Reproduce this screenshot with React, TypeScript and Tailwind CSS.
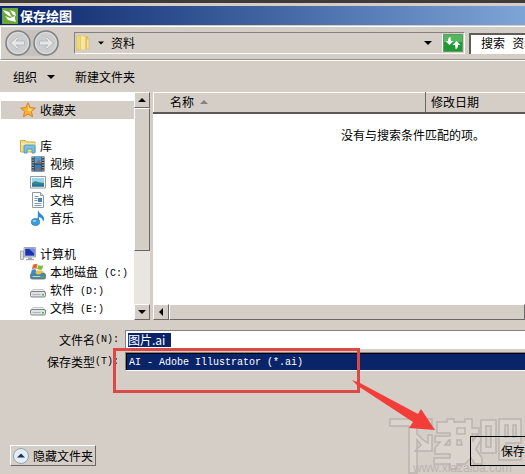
import { useState } from 'react';
import type { ReactNode } from 'react';

const FolderIcon = () => (
  <svg width="16" height="18" viewBox="0 0 16 18">
    <path d="M7 2h6l.5 13H7z" fill="#e0c258" />
    <path d="M11.500 5h2.500v10h-2.500z" fill="#f3e29a" stroke="#cdb05a" strokeWidth=".5" />
    <path d="M1.500 2l4-.5v14l-4 .5z" fill="#f0d877" stroke="#d9bb55" strokeWidth=".5" />
    <path d="M5.500 1.500l5 1v13.500l-5-.5z" fill="#f8e79b" stroke="#dcc06a" strokeWidth=".5" />
  </svg>
);

const StarIcon = () => (
  <svg width="16" height="16" viewBox="0 0 16 16">
    <path d="M8 .8l2.100 4.800 5.200.5-3.900 3.500 1.200 5.200L8 12.100l-4.600 2.700 1.200-5.200L.7 6.100l5.200-.5z" fill="#f9b233" stroke="#dd7f22" />
    <path d="M8 3l1.300 3.400 3.600.4-2.600 2.400L8 9z" fill="#fdd978" />
  </svg>
);

const LibraryIcon = () => (
  <svg width="16" height="16" viewBox="0 0 16 16">
    <path d="M.5 2.500h5l1 1.500h8.500v10H.5z" fill="#f0dd85" stroke="#c9ae50" />
    <path d="M1 6h14" stroke="#fff5c0" />
    <path d="M4 8.500q0-1.500 1.500-1.500h8q1.500 0 1.500 1.500V15h-3v-4H7v4H4z" fill="#79c2e3" stroke="#3f8fb8" strokeWidth=".8" />
  </svg>
);

const VideoIcon = () => (
  <svg width="16" height="16" viewBox="0 0 16 16">
    <path d="M1.500 .5h13v15h-13z" fill="#283440" />
    <path d="M4.500 1h7v6.500h-7z" fill="#4fa0d8" />
    <path d="M4.500 8.500h7V15h-7z" fill="#387db8" />
    <path d="M6 7l3-4 2 4zM6 14l3-3 2 3z" fill="#9a684e" />
    <path d="M3 1v14M13 1v14" stroke="#e8eef2" strokeWidth="1.200" strokeDasharray="1.300 1.200" />
  </svg>
);

const PictureIcon = () => (
  <svg width="16" height="16" viewBox="0 0 16 16">
    <path d="M.5 2.500h15v11.500H.5z" fill="#fff" stroke="#8f9daa" />
    <path d="M2 4h12v8.500H2z" fill="#9bd3ee" />
    <path d="M2 9q3-3 6-1l6 1v3.500H2z" fill="#2e8c84" />
    <path d="M2 10.500h12v2H2z" fill="#286fa6" />
  </svg>
);

const DocumentIcon = () => (
  <svg width="16" height="16" viewBox="0 0 16 16">
    <path d="M2.500 .5h8l3 3v12h-11z" fill="#fff" stroke="#8d99a5" />
    <path d="M10.500 .5v3h3" fill="#dce5ec" stroke="#8d99a5" />
    <path d="M4.500 4.500h4M4.500 6.500h3M4.500 11.500h7M4.500 13.500h7" stroke="#7e96ae" />
    <path d="M8 6h4v4H8z" fill="#477fb7" />
    <path d="M4.500 8.500h3" stroke="#7e96ae" />
  </svg>
);

const MusicIcon = () => (
  <svg width="16" height="16" viewBox="0 0 16 16">
    <path d="M8 0q1 3 4 5 3.500 3 1 7 0-4-4-5v5H7.500z" fill="#2c8dcc" />
    <ellipse cx="5.500" cy="12" rx="4.200" ry="3.500" fill="#3c9bd6" stroke="#1e6fae" strokeWidth=".6" />
    <ellipse cx="4.500" cy="11" rx="1.800" ry="1.100" fill="#92d2f3" />
  </svg>
);

const ComputerIcon = () => (
  <svg width="16" height="16" viewBox="0 0 16 16">
    <path d="M.5 5h3v8.500h-3z" fill="#dadfe2" stroke="#8b9298" strokeWidth=".7" />
    <path d="M4 1.500h11.500v9.500H4z" fill="#d2d6da" stroke="#858c96" strokeWidth=".7" />
    <path d="M5.200 2.700h9.200v7H5.200z" fill="#1f2fb2" />
    <path d="M9 2.700h5.400v5z" fill="#6f87e8" />
    <path d="M8 11.500h4v1.500H8zM6 13h8v1.200H6z" fill="#a4aab0" />
  </svg>
);

const DriveIcon = ({ system = false }: { system?: boolean }) => (
  <svg width="16" height="16" viewBox="0 0 16 16">
    <path d="M3 7.500h10l2.500 3H.5z" fill={system ? '#a9c3cb' : '#eef0f0'} stroke="#a2a7a9" strokeWidth=".6" />
    <rect x=".5" y="9.500" width="15" height="5.500" rx="1.500" fill={system ? '#4787a0' : '#dfe2e2'} stroke="#72797d" strokeWidth=".9" />
    <path d="M2.500 12.500h8" stroke={system ? '#b8d8e0' : '#aeb4b6'} />
    <path d="M12 12h2v1.500h-2z" fill="#54b33a" />
    {system && (
      <>
        <path d="M3 .8q2.500-1.500 4.500-.3l-1 4.300Q4.500 4 2 5z" fill="#e8662c" />
        <path d="M8.300 1q2 1.300 5 .2l-1.200 4.200Q9.500 6.300 7.200 5z" fill="#7dbb3a" />
        <path d="M1.800 5.800Q4.300 4.800 6.300 5.800l-1 4Q3 9 .8 9.800z" fill="#3b8ad4" />
        <path d="M7 6q2.300 1 4.800.3l-1 3.700Q8 11 6 9.800z" fill="#f5c32c" />
      </>
    )}
  </svg>
);

const NavArrow = ({ flip = false }: { flip?: boolean }) => (
  <svg width="26" height="26" viewBox="0 0 26 26" className={flip ? 'rotate-180' : ''}>
    <circle cx="13" cy="13" r="12" fill="#c3c5c7" stroke="#808284" strokeWidth="1.500" />
    <circle cx="13" cy="13" r="10.500" fill="#cccdce" stroke="#dedfe0" />
    <path d="M5.500 13l6.500-6 1.500 1.500-2.500 2.500h8.500v4H11l2.500 2.500L12 19z" fill="#e6e6e6" stroke="#b0b1b2" strokeWidth=".8" />
  </svg>
);

const Triangle = ({ dir = 'down', className = '' }: { dir?: 'down' | 'up' | 'left'; className?: string }) => (
  <svg width="8" height="8" viewBox="0 0 8 8" fill="currentColor" className={`shrink-0 ${className}`}>
    {dir === 'down' && <path d="M0 2h8L4 6z" />}
    {dir === 'up' && <path d="M0 6h8L4 2z" />}
    {dir === 'left' && <path d="M6 0v8L2 4z" />}
  </svg>
);

const Latin = ({ children }: { children: ReactNode }) => (
  <span className="font-['Liberation_Mono',monospace] text-[10px]">{children}</span>
);

const raised = 'border border-t-white border-l-white border-r-[#6b6865] border-b-[#6b6865] bg-[#d5cec7]';

const libraries = [
  { label: '视频', icon: <VideoIcon /> },
  { label: '图片', icon: <PictureIcon /> },
  { label: '文档', icon: <DocumentIcon /> },
  { label: '音乐', icon: <MusicIcon /> },
];

const drives = [
  { label: '本地磁盘', letter: '(C:)', icon: <DriveIcon system /> },
  { label: '软件', letter: '(D:)', icon: <DriveIcon /> },
  { label: '文档', letter: '(E:)', icon: <DriveIcon /> },
];

function TreeItem({ icon, label, letter, nested, selected }: {
  icon: ReactNode; label: string; letter?: string; nested?: boolean; selected?: boolean;
}) {
  return (
    <li>
      <button className={`flex h-[18px] w-full items-center gap-1 whitespace-nowrap ${nested ? 'pl-[29px]' : 'pl-[19px]'} ${selected ? 'bg-[#d5cec7]' : ''}`}>
        {icon}
        <span>{label}</span>
        {letter && <span className="pl-0.5"><Latin>{letter}</Latin></span>}
      </button>
    </li>
  );
}

function Sidebar() {
  return (
    <div className="flex w-[150px] shrink-0 bg-white">
      <ul className="min-w-0 flex-1 overflow-hidden pt-[9px] pl-px">
        <TreeItem icon={<StarIcon />} label="收藏夹" selected />
        <li className="h-[18px]" />
        <TreeItem icon={<LibraryIcon />} label="库" />
        {libraries.map(l => <TreeItem key={l.label} {...l} nested />)}
        <li className="h-[18px]" />
        <TreeItem icon={<ComputerIcon />} label="计算机" />
        {drives.map(d => <TreeItem key={d.letter} {...d} nested />)}
      </ul>
      <div className="flex w-4 flex-col bg-[#e9e5e1]">
        <button aria-label="向上滚动" className={`flex h-4 items-center justify-center ${raised}`}><Triangle dir="up" /></button>
        <div className={`h-[143px] ${raised}`} />
        <button aria-label="向下滚动" className={`mt-auto flex h-4 items-center justify-center ${raised}`}><Triangle /></button>
      </div>
    </div>
  );
}

function FileList() {
  return (
    <div className="flex min-w-0 flex-1 flex-col bg-white">
      <table className="w-full table-fixed border-collapse">
        <thead>
          <tr className="h-5 border-t border-b-2 border-t-white border-b-[#5b5855] bg-[#d5cec7] text-left">
            <th className="w-[272px] border-r border-l border-l-white border-r-[#6b6865] pl-4 font-normal">
              <span className="flex items-center gap-1.5">名称 <Triangle dir="up" className="text-[#85817d]" /></span>
            </th>
            <th className="pl-[5px] font-normal whitespace-nowrap">修改日期</th>
          </tr>
        </thead>
      </table>
      <p className="flex-1 pt-3 pl-[188px] whitespace-nowrap">没有与搜索条件匹配的项。</p>
      <div className="flex h-4 bg-[#d5cec7]">
        <button aria-label="向左滚动" className={`flex w-4 items-center justify-center ${raised}`}><Triangle dir="left" /></button>
        <div className={`flex-1 ${raised}`} />
      </div>
    </div>
  );
}

function Watermark() {
  return (
    <div className="pointer-events-none absolute right-0.5 bottom-0 text-[#bbb4ae]">
      <svg width="134" height="56" viewBox="0 0 134 56" fill="#dad4cd" stroke="#bbb4ae" strokeWidth="1.500">
        <path d="M1 1h42v7H28v8l5 5 6 4v-8h4v16H26l6-6-4-5v33h-8V8H1z" />
        <path fillRule="evenodd" d="M48 4h10V1h7v3h11V1h7v9h7v6h-7l1 7 4-6 5 3-6 11 6 9v6h-7l-4-6-6 6h-8v5h-7v-5H45v-6h16v-4H46v-6l5-6h-5v-6h15v-3H48zM60 22l-4 5h5v-5zM68 22v5h5l-1-5z" />
        <path d="M68 10h8v6h-8z" />
        <path fillRule="evenodd" d="M92 2h15v33H92zM97 8v21h5V8zM110 1h22v24h-15v10h9v-5h6v12h-22zM116 7v12h3V7zM124 7v12h3V7z" />
      </svg>
      <p className="-mt-3 pl-6 font-['Liberation_Sans',sans-serif] text-[12px] leading-3">www.xiazaiba.com</p>
    </div>
  );
}

export default function App() {
  const [fileName, setFileName] = useState('图片.ai');

  return (
    <div className="relative flex h-screen flex-col overflow-hidden border-t-3 border-[#403a3b] bg-[#d5cec7] font-['Noto_Sans_CJK_SC',sans-serif] text-[12px] leading-[18px] text-black">
      {/* Title bar */}
      <header className="mt-[3px] flex h-[19px] shrink-0 items-center gap-0.5 bg-linear-to-r from-[#0c246a] to-[#7ea5d8] pl-0.5 text-white">
        <svg width="16" height="16" viewBox="0 0 16 16">
          <path d="M0 0h16v16H0z" fill="#69a83a" />
          <path d="M1 2l6 2 3 5-3-1-4-3zM8 2l5 2 1 4-3-1zM3 8l5 2 5-2v3l1 3-4-1-4-1z" fill="#fff" />
        </svg>
        <h1 className="text-[13px] font-bold">保存绘图</h1>
      </header>

      {/* Address bar */}
      <div className="mt-px flex h-[34px] shrink-0 items-center border-t border-b border-l border-t-white border-l-white border-b-[#96918c] pl-1">
        <div className="flex gap-0.5 rounded-full bg-[#c5c2bf]">
          <button aria-label="后退"><NavArrow /></button>
          <button aria-label="前进"><NavArrow flip /></button>
        </div>
        <div className="ml-[15px] flex h-[22px] min-w-0 flex-1 items-center border border-t-[#85817d] border-r-white border-b-white border-l-[#85817d]">
          <FolderIcon />
          <Triangle className="mx-1.5 scale-75" />
          <span>资料</span>
          <button aria-label="历史位置" className="mr-2.5 ml-auto"><Triangle /></button>
          <button aria-label="刷新" className="mr-px border-l border-white">
            <svg width="20" height="18" viewBox="0 0 20 18">
              <path d="M.5.5h19v17H.5z" fill="#219a35" stroke="#5b9f63" />
              <path d="M1 1h18v7H1z" fill="#53b75d" />
              <path d="M7.500 3Q5 3 5 7H2.500l4 4 4-4H8q-.5-2-.5-4zM12.500 15q2.500 0 2.500-4h2.500l-4-4-4 4H12q.5 2 .5 4z" fill="#fff" />
            </svg>
          </button>
        </div>
        <input aria-label="搜索" defaultValue="搜索 资料" className="ml-1 h-[21px] w-14 border-t-2 border-l-2 border-[#5f5c59] bg-white pb-0.5 pl-2.5 font-['Liberation_Mono','Noto_Sans_CJK_SC',monospace]" />
      </div>

      <div className="flex h-8 shrink-0 items-center gap-5 border-t border-white pl-[13px]">
        <button className="flex items-center gap-2.5">组织 <Triangle /></button>
        <button>新建文件夹</button>
      </div>

      <main className="flex h-[228px] shrink-0 gap-[3px]">
        <Sidebar />
        <FileList />
      </main>

      {/* File name and type */}
      <form className="relative z-10 mt-2.5 grid grid-cols-[125px_1fr] gap-y-[3px]">
        <label htmlFor="name" className="flex h-[19px] items-center justify-end pr-1.5 whitespace-nowrap">文件名<Latin>(N):</Latin></label>
        <div className="flex h-[19px] items-center border-t border-l border-[#85817d] bg-white pl-0.5">
          <input id="name" value={fileName} onChange={e => setFileName(e.target.value)} className="h-[14px] w-[43px] bg-[#0a246a] text-white" />
        </div>
        <label htmlFor="type" className="flex h-[19px] items-center justify-end pr-1.5 whitespace-nowrap">保存类型<Latin>(T):</Latin></label>
        <div className="h-[19px] border-t border-b border-l border-t-[#85817d] border-b-white border-l-[#85817d]">
          <select id="type" className="block h-[17px] w-full appearance-none border-t border-l border-black bg-[#0a246a] pl-0.5 font-['Liberation_Mono',monospace] text-[10px] text-white">
            <option>AI - Adobe Illustrator (*.ai)</option>
          </select>
        </div>
        <div className="pointer-events-none absolute top-[18px] left-[113px] h-[45px] w-[247px] border-3 border-[#dc4846]" />
        <svg className="pointer-events-none absolute top-[50px] left-[352px]" width="84" height="52" viewBox="0 0 84 52">
          <path d="M0 0l8 3 58 31 3-5 14 21-26-2 4-6L6 6z" fill="#f33d39" />
        </svg>
      </form>

      <footer className="relative mt-auto flex items-end justify-between pb-2">
        <button className={`ml-2.5 flex h-[21px] items-center gap-1 px-0.5 ${raised}`}>
          <svg width="16" height="16" viewBox="0 0 16 16">
            <circle cx="8" cy="8" r="7.500" fill="#e6ecf3" stroke="#93a3b5" />
            <path d="M4 9.500h8L8 5.500z" fill="#18325c" />
          </svg>
          隐藏文件夹
        </button>
        <Watermark />
        <button className="relative h-[30px] w-[55px] border border-r-0 border-black pl-[30px] text-left whitespace-nowrap">保存</button>
      </footer>
    </div>
  );
}
